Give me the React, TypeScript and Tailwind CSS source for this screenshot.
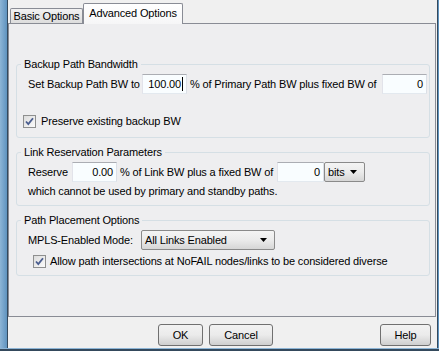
import React from "react";

function Arrow() {
  return (
    <svg width="7" height="4" viewBox="0 0 7 4" className="shrink-0">
      <path d="M0 0h7L3.5 4z" fill="#000" />
    </svg>
  );
}

function CheckBox() {
  return (
    <span className="flex h-[13px] w-[13px] shrink-0 items-center justify-center border border-[#8e8f8f] bg-gradient-to-br from-[#dcdcdc] to-[#fbfbfb]">
      <svg width="9" height="9" viewBox="0 0 9 9">
        <path d="M1 4.5l2.3 2.6L8 1.2" fill="none" stroke="#4a5d8f" strokeWidth="1.8" />
      </svg>
    </span>
  );
}

function TextBox({ value, width, caret = false }: { value: string; width: string; caret?: boolean }) {
  return (
    <span
      className={[
        "flex h-[20px] shrink-0 items-center justify-end border border-[#abadb3] border-l-[#e2e3ea] border-r-[#dbdfe6] border-b-[#e3e9ef] bg-[#f9fdff] pr-[3px]",
        width,
      ].join(" ")}
    >
      {value}
      {caret ? <span className="ml-[1px] h-[14px] w-px bg-black" /> : null}
    </span>
  );
}

function Dropdown({ label, width }: { label: string; width: string }) {
  return (
    <span
      className={[
        "flex h-[20px] shrink-0 items-center justify-between rounded-[2px] border border-[#8a8a8a] bg-gradient-to-b from-[#f4f4f4] via-[#ebebeb] to-[#d6d6d6] pl-[3px] pr-[7px]",
        width,
      ].join(" ")}
    >
      <span>{label}</span>
      <Arrow />
    </span>
  );
}

function Button({ label, width }: { label: string; width: string }) {
  return (
    <button
      className={[
        "flex h-[22px] items-center justify-center rounded-[3px] border border-[#707070] bg-gradient-to-b from-[#f2f2f2] via-[#ebebeb] to-[#cfcfcf] text-[11px]",
        width,
      ].join(" ")}
      type="button"
    >
      {label}
    </button>
  );
}

export default function App() {
  return (
    <div className="flex h-[351px] w-[439px] flex-col overflow-hidden whitespace-nowrap bg-[#f0f0f0] font-['Tahoma','Liberation_Sans',sans-serif] text-[11px] leading-[13px] tracking-[-0.15px] text-black">
      <div className="flex min-h-0 flex-1">
        <div className="w-[8px] border-r border-[#34495c] bg-gradient-to-r from-[#8db5d6] to-[#5f93bf]" />

        <div className="flex w-[429px] flex-col">
          <div className="flex h-[23px] items-end pl-[2px]">
            <div className="flex h-[15px] w-[73px] items-center justify-center rounded-t-[2px] border border-b-0 border-[#898c95] bg-gradient-to-b from-[#f2f2f2] to-[#dddddd]">
              Basic Options
            </div>
            <div className="relative z-10 -mb-px flex h-[21px] w-[100px] items-start justify-center rounded-t-[2px] border border-b-0 border-[#898c95] bg-gradient-to-b from-[#ffffff] to-[#f6f6f7] pt-[3px]">
              Advanced Options
            </div>
          </div>

          <div className="flex h-[294px] w-[428px] flex-col border border-[#898c95] bg-[#eeeef0] pl-[7px] pr-[5px] pt-[34px]">
            <fieldset className="flex h-[80px] flex-col rounded-[3px] border border-[#d5dfe5] pl-[6px]">
              <legend className="ml-[-2px] px-[3px] leading-[13px]">Backup Path Bandwidth</legend>
              <div className="mt-[3px] flex h-[20px] items-center pl-[5px]">
                <span className="w-[114px] shrink-0">Set Backup Path BW to</span>
                <TextBox value="100.00" width="w-[45px]" caret />
                <span className="w-[195px] shrink-0 pl-[3px]">% of Primary Path BW plus fixed BW of</span>
                <TextBox value="0" width="w-[45px]" />
              </div>
              <label className="mt-[21px] flex h-[13px] items-center gap-[5px]">
                <CheckBox />
                <span>Preserve existing backup BW</span>
              </label>
            </fieldset>

            <fieldset className="mt-[8px] flex h-[60px] flex-col rounded-[3px] border border-[#d5dfe5] pl-[6px]">
              <legend className="ml-[-2px] px-[3px] leading-[13px]">Link Reservation Parameters</legend>
              <div className="mt-[3px] flex h-[20px] items-center pl-[5px]">
                <span className="w-[44px] shrink-0">Reserve</span>
                <TextBox value="0.00" width="w-[45px]" />
                <span className="w-[160px] shrink-0 pl-[3px]">% of Link BW plus a fixed BW of</span>
                <TextBox value="0" width="w-[47px]" />
                <Dropdown label="bits" width="w-[41px]" />
              </div>
              <div className="mt-[3px] pl-[5px]">which cannot be used by primary and standby paths.</div>
            </fieldset>

            <fieldset className="mt-[8px] flex h-[62px] flex-col rounded-[3px] border border-[#d5dfe5] pl-[6px]">
              <legend className="ml-[-2px] px-[3px] leading-[13px]">Path Placement Options</legend>
              <div className="mt-[3px] flex h-[20px] items-center pl-[5px]">
                <span className="w-[113px] shrink-0">MPLS-Enabled Mode:</span>
                <Dropdown label="All Links Enabled" width="w-[134px]" />
              </div>
              <label className="mt-[5px] flex h-[13px] items-center gap-[4px] pl-[10px]">
                <CheckBox />
                <span>Allow path intersections at NoFAIL nodes/links to be considered diverse</span>
              </label>
            </fieldset>
          </div>

          <div className="mt-[7px] flex items-center gap-[6px] pl-[150px] pr-[6px]">
            <Button label="OK" width="w-[45px]" />
            <Button label="Cancel" width="w-[64px]" />
            <span className="flex-1" />
            <Button label="Help" width="w-[51px]" />
          </div>
        </div>

        <div className="w-[2px] border-l border-[#34495c] bg-[#5f93bf]" />
      </div>
      <div className="h-[3px] border-t border-[#8db5d6] bg-[#34495c]" />
    </div>
  );
}
